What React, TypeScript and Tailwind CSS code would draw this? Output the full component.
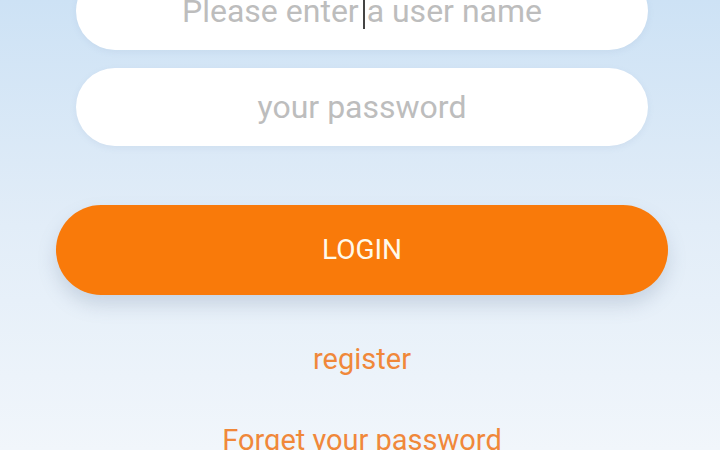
import { useState } from "react";

const LoginPage = () => {
  // state
  const [username, setUsername] = useState("");
  const [password, setPassword] = useState("");

  return (
    <div
      className="w-[720px] h-[450px] overflow-hidden bg-gradient-to-b from-[#cde2f5] via-[#e2edf8] to-[#f1f6fb]"
      style={{ fontFamily: "Roboto, 'Noto Sans', sans-serif" }}
    >
      <div className="flex flex-col items-center -mt-[28px] pl-[4px]">
        {/* username */}
        <div className="relative w-[572px] h-[78px] rounded-full bg-white shadow-[0_2px_6px_rgba(120,150,190,0.12)] flex items-center justify-center">
          <input
            value={username}
            onChange={(e) => setUsername(e.target.value)}
            placeholder="Please enter a user name"
            className="w-full h-full bg-transparent text-center text-[32px] text-[#555] placeholder:text-[#bdbdbd] outline-none rounded-full"
          />
          <span className="absolute left-[287px] top-[26px] w-[2px] h-[31px] bg-[#444]" />
        </div>

        {/* password */}
        <div className="mt-[18px] w-[572px] h-[78px] rounded-full bg-white shadow-[0_2px_6px_rgba(120,150,190,0.12)]">
          <input
            type="password"
            value={password}
            onChange={(e) => setPassword(e.target.value)}
            placeholder="your password"
            className="w-full h-full bg-transparent text-center text-[32px] text-[#555] placeholder:text-[#bdbdbd] outline-none rounded-full"
          />
        </div>

        {/* login */}
        <button className="mt-[59px] w-[612px] h-[90px] rounded-full bg-[#f97a0a] text-[#fff9ea] text-[28px] shadow-[0_10px_18px_rgba(110,130,160,0.25)]">
          LOGIN
        </button>

        {/* links */}
        <a className="mt-[50px] text-[29px] text-[#f0883a] leading-none">register</a>
        <a className="mt-[52px] text-[29px] text-[#f0883a] leading-none">Forget your password</a>
      </div>
    </div>
  );
};

export default function App() {
  return <LoginPage />;
}
